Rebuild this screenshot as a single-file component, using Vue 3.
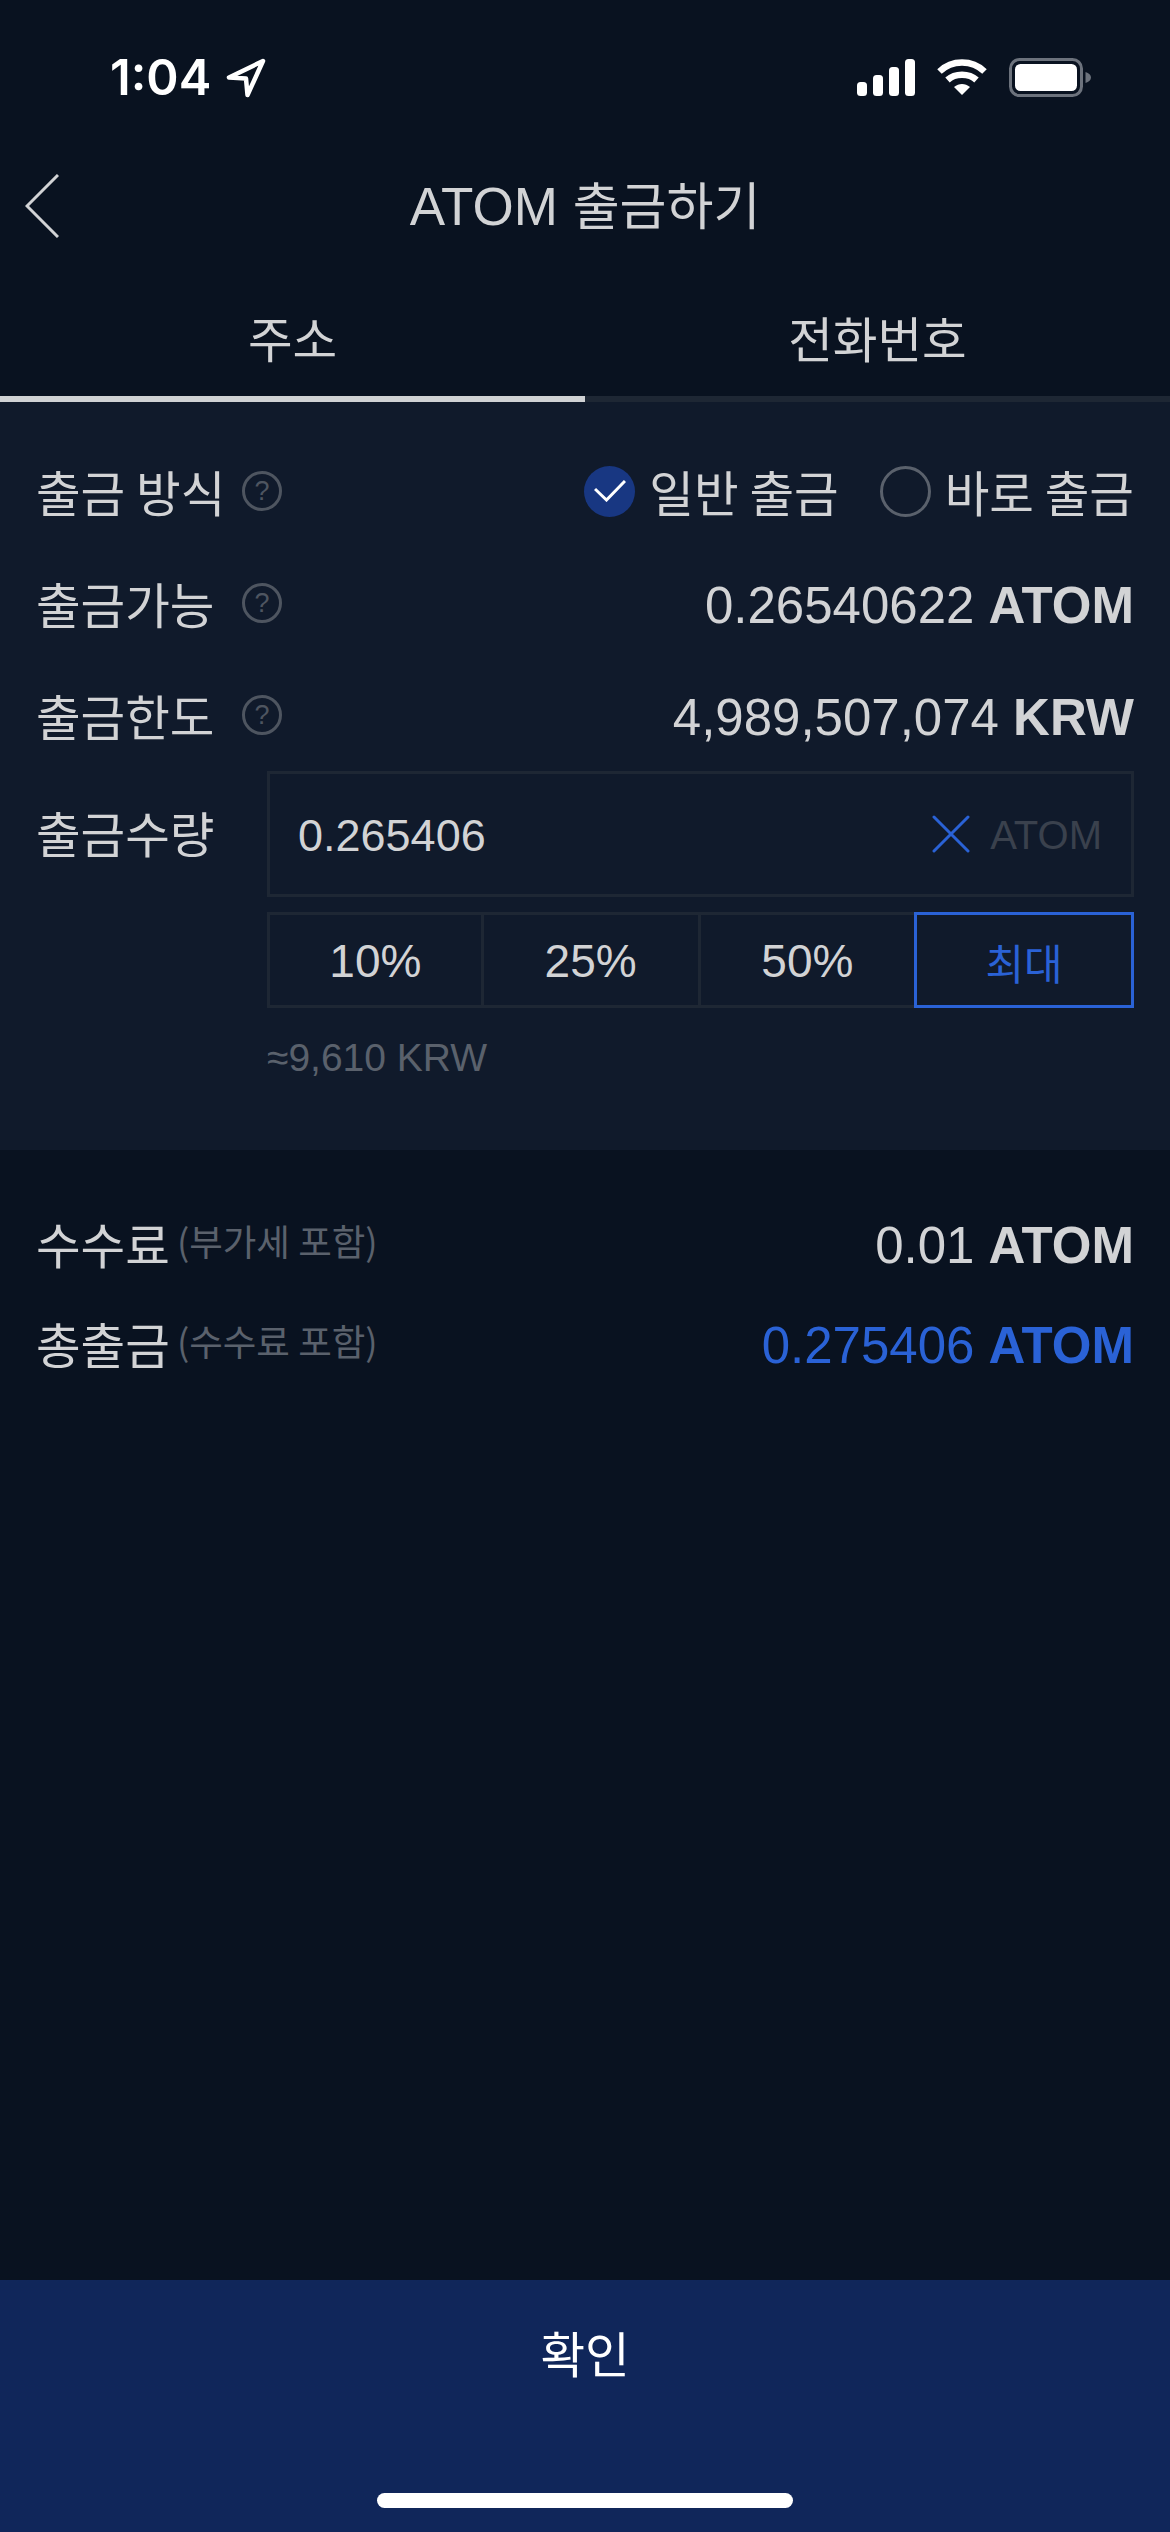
<template>
  <div class="page">
    <div class="status">
      <div class="status-left">
        <span class="time">1:04</span>
        <svg class="loc" width="40" height="40" viewBox="0 0 40 40">
          <path d="M37 3 L3 19.500 L20 20.500 L21.500 37 Z" fill="none" stroke="#fff" stroke-width="4.500" stroke-linejoin="round" />
        </svg>
      </div>
      <div class="status-right">
        <svg width="58" height="37" viewBox="0 0 58 37" fill="#fff">
          <rect x="0" y="23" width="10" height="14" rx="3.5" />
          <rect x="16" y="16" width="10" height="21" rx="3.5" />
          <rect x="32" y="8" width="10" height="29" rx="3.5" />
          <rect x="48" y="0" width="10" height="37" rx="3.5" />
        </svg>
        <svg width="50" height="37" viewBox="0 0 50 37" fill="none" stroke="#fff" stroke-width="6.5">
          <path d="M2.5 12.5 C15 0.5 35 0.5 47.5 12.5" />
          <path d="M10.5 21 C18 14 32 14 39.5 21" />
          <path d="M17 28 L25 36 L33 28 C28 24 22 24 17 28 Z" fill="#fff" stroke="none" />
        </svg>
        <svg width="82" height="39" viewBox="0 0 82 39">
          <rect x="1.5" y="1.5" width="71" height="36" rx="9" fill="none" stroke="#6c727c" stroke-width="3" />
          <rect x="6" y="6" width="62" height="27" rx="5.5" fill="#fff" />
          <path d="M76.500 14 C80 15 82 17 82 19.500 C82 22 80 24 76.500 25 Z" fill="#6c727c" />
        </svg>
      </div>
    </div>

    <div class="header">
      <svg class="back" width="34" height="64" viewBox="0 0 34 64">
        <path d="M33 1 L2 32 L33 63" fill="none" stroke="#d2d3d5" stroke-width="3" />
      </svg>
      <h1 class="title">ATOM <span class="ko">출금하기</span></h1>
    </div>

    <div class="tabs">
      <div class="tab active"><span class="ko">주소</span></div>
      <div class="tab"><span class="ko">전화번호</span></div>
    </div>

    <div class="panel">
      <div class="row">
        <div class="label">
          <span class="ko">출금 방식</span>
          <span class="help">?</span>
        </div>
        <div class="options">
          <div class="option">
            <span class="radio checked">
              <svg width="32" height="22" viewBox="0 0 32 22">
                <path d="M1 9 L12.500 20 L31 1" fill="none" stroke="#fff" stroke-width="3" />
              </svg>
            </span>
            <span class="ko">일반 출금</span>
          </div>
          <div class="option">
            <span class="radio"></span>
            <span class="ko">바로 출금</span>
          </div>
        </div>
      </div>

      <div class="row" v-for="item in infoRows" :key="item.label">
        <div class="label">
          <span class="ko">{{ item.label }}</span>
          <span class="help">?</span>
        </div>
        <div class="value">{{ item.amount }} <b>{{ item.unit }}</b></div>
      </div>

      <div class="amount">
        <div class="amount-label ko">출금수량</div>
        <div class="amount-main">
          <div class="input">
            <span class="input-value">0.265406</span>
            <svg width="38" height="38" viewBox="0 0 38 38">
              <path d="M2 2 L36 36 M36 2 L2 36" fill="none" stroke="#2a62d6" stroke-width="3" stroke-linecap="round" />
            </svg>
            <span class="input-unit">ATOM</span>
          </div>
          <div class="presets">
            <div
              v-for="preset in presets"
              :key="preset"
              class="preset"
              :class="{ 'preset-active': preset === '최대' }"
            >
              <span :class="{ ko: preset === '최대' }">{{ preset }}</span>
            </div>
          </div>
          <div class="estimate">≈9,610 KRW</div>
        </div>
      </div>
    </div>

    <div class="fees">
      <div class="fee-row">
        <div class="fee-label">
          <span class="ko">수수료</span>
          <span class="ko fee-note">(부가세 포함)</span>
        </div>
        <div class="value">0.01 <b>ATOM</b></div>
      </div>
      <div class="fee-row">
        <div class="fee-label">
          <span class="ko">총출금</span>
          <span class="ko fee-note">(수수료 포함)</span>
        </div>
        <div class="value total">0.275406 <b>ATOM</b></div>
      </div>
    </div>

    <div class="confirm">
      <div class="confirm-text ko">확인</div>
      <div class="home"></div>
    </div>
  </div>
</template>

<script setup>
const infoRows = [
  { label: '출금가능', amount: '0.26540622', unit: 'ATOM' },
  { label: '출금한도', amount: '4,989,507,074', unit: 'KRW' },
]

const presets = ['10%', '25%', '50%', '최대']
</script>

<style scoped>
.page {
  width: 1170px;
  min-height: 2532px;
  display: flex;
  flex-direction: column;
  background: #091220;
  color: #d2d3d5;
  font-family: "Liberation Sans", "Noto Sans CJK KR", sans-serif;
  font-size: 51px;
}

.ko {
  font-family: "Noto Sans CJK KR", sans-serif;
  font-size: 48.5px;
  font-weight: 400;
}

.status {
  height: 150px;
  box-sizing: border-box;
  padding: 58px 79px 0 110px;
  display: flex;
  justify-content: space-between;
  align-items: flex-start;
}

.status-left {
  display: flex;
  align-items: center;
  gap: 15px;
}

.time {
  font-family: Inter, sans-serif;
  font-size: 49px;
  font-weight: 600;
  line-height: 40px;
  color: #fff;
}

.status-right {
  display: flex;
  align-items: center;
  gap: 22px;
}

.header {
  height: 110px;
  position: relative;
  display: flex;
  align-items: center;
  justify-content: center;
}

.back {
  position: absolute;
  left: 25px;
  top: 24px;
}

.title {
  margin: 0;
  font-size: 53px;
  font-weight: 400;
  line-height: 110px;
}

.title .ko {
  font-size: 51px;
}

.tabs {
  display: grid;
  grid-template-columns: 1fr 1fr;
}

.tab {
  height: 142px;
  box-sizing: border-box;
  padding-top: 18px;
  display: flex;
  align-items: center;
  justify-content: center;
  border-bottom: 6px solid #1e2734;
}

.tab.active {
  border-bottom-color: #d0d2d4;
}

.panel {
  height: 748px;
  box-sizing: border-box;
  padding: 33px 36px 0;
  background: #101a2b;
}

.row {
  height: 112px;
  display: flex;
  align-items: center;
  justify-content: space-between;
}

.label {
  display: flex;
  align-items: center;
}

.help {
  position: absolute;
  left: 242px;
  width: 40px;
  height: 40px;
  box-sizing: border-box;
  border: 3px solid #4e5560;
  border-radius: 50%;
  display: flex;
  align-items: center;
  justify-content: center;
  font-size: 27px;
  color: #4e5560;
}

.options {
  display: flex;
  gap: 41px;
}

.option {
  display: flex;
  align-items: center;
  gap: 14px;
}

.radio {
  width: 51px;
  height: 51px;
  box-sizing: border-box;
  border: 3px solid #5a616c;
  border-radius: 50%;
  display: flex;
  align-items: center;
  justify-content: center;
}

.radio.checked {
  border: none;
  background: #183782;
}

.value {
  padding-top: 4px;
  white-space: pre-wrap;
}

.value b {
  font-weight: 700;
}

.amount {
  display: grid;
  grid-template-columns: 231px 1fr;
}

.amount-label {
  height: 126px;
  line-height: 122px;
}

.input {
  height: 126px;
  box-sizing: border-box;
  border: 3px solid #1e2734;
  padding: 0 29px 0 28px;
  display: flex;
  align-items: center;
  font-size: 45px;
}

.input-value {
  flex: 1;
  padding-top: 3px;
}

.input-unit {
  margin-left: 20px;
  padding-top: 3px;
  font-size: 40px;
  color: #3a414d;
}

.presets {
  margin-top: 15px;
  display: grid;
  grid-template-columns: repeat(4, 1fr);
}

.preset {
  height: 96px;
  box-sizing: border-box;
  padding-top: 2px;
  border: 3px solid #1e2734;
  margin-left: -3px;
  display: flex;
  align-items: center;
  justify-content: center;
  font-size: 46px;
}

.preset:first-child {
  margin-left: 0;
}

.preset .ko {
  font-size: 42px;
}

.preset-active {
  border-color: #2a62d6;
  color: #2a62d6;
  position: relative;
}

.estimate {
  margin-top: 20px;
  line-height: 60px;
  font-size: 39px;
  color: #5a616c;
}

.fees {
  padding: 43px 36px 0;
  flex: 1;
}

.fee-row {
  height: 100px;
  display: flex;
  align-items: center;
  justify-content: space-between;
}

.fee-label {
  display: flex;
  align-items: center;
  gap: 7px;
}

.fee-note {
  margin-top: -5px;
  font-size: 36.5px;
  color: #5a616c;
}

.total {
  color: #2a62d6;
}

.confirm {
  height: 252px;
  background: #10265a;
  display: flex;
  flex-direction: column;
  align-items: center;
}

.confirm-text {
  height: 144px;
  line-height: 144px;
  color: #fff;
}

.home {
  width: 416px;
  height: 15px;
  margin-top: 69px;
  border-radius: 8px;
  background: #fff;
}
</style>
